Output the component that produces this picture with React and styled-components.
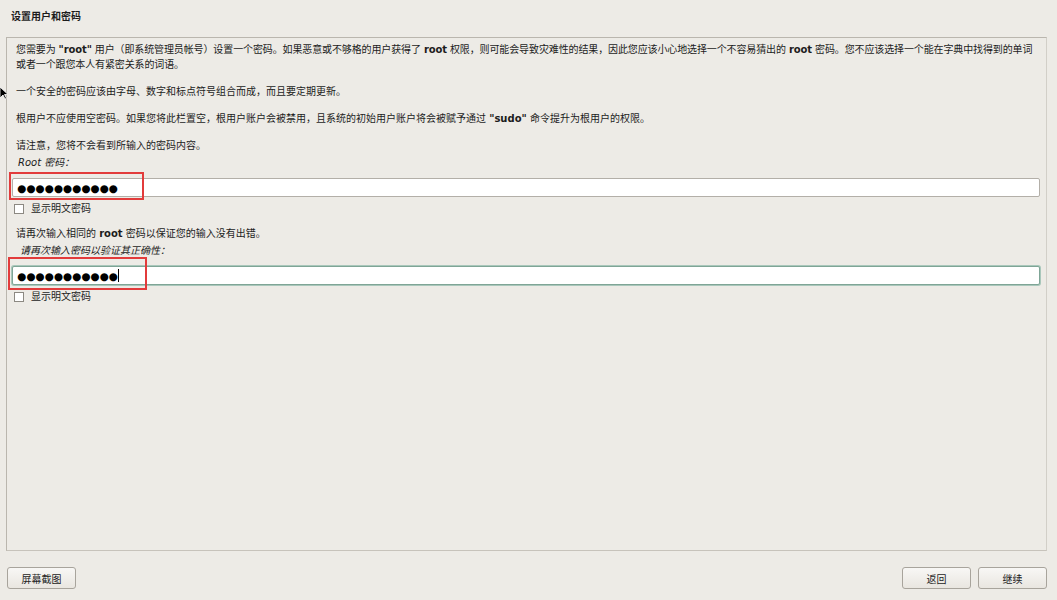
import React from "react"
import styled, { createGlobalStyle } from "styled-components"

const Global = createGlobalStyle`
  html, body {
    margin: 0;
    padding: 0;
    background: #edebe6;
  }
  body {
    font-family: "DejaVu Sans", "Noto Sans CJK SC", sans-serif;
    font-size: 10px;
    color: #1c1c1c;
  }
`

const Page = styled.div`
  position: relative;
  width: 1057px;
  height: 600px;
  display: flex;
  flex-direction: column;
  box-sizing: border-box;
  padding: 0 10px 0 6px;
  overflow: hidden;
`

const Title = styled.div`
  font-weight: bold;
  height: 37px;
  line-height: 33px;
  padding-left: 5px;
`

const Panel = styled.div`
  flex: 1;
  border: 1px solid #bab6ae;
  border-right-color: #d2cfc8;
  border-bottom-color: #c7c3bb;
  padding: 4px 6px 0 9px;
`

const Para = styled.p`
  margin: 0 0 12px 0;
  line-height: 15px;
  letter-spacing: ${(p) => (p.tight ? "-0.12px" : "0")};
`

const Label = styled.div`
  font-style: italic;
  line-height: 15px;
  padding-left: ${(p) => p.indent}px;
  margin-top: -10px;
  margin-bottom: 8px;
`

const Field = styled.div`
  margin: 0 0 0 -4px;
  height: 19px;
  box-sizing: border-box;
  background: #ffffff;
  border: 1px solid ${(p) => (p.focused ? "#7fa596" : "#b3afa8")};
  box-shadow: ${(p) => (p.focused ? "0 0 0 1px #a9c7bb" : "none")};
  border-radius: 2px;
  display: flex;
  align-items: center;
  padding-left: 4px;
  font-size: 10.5px;
  color: #000;
`

const Caret = styled.span`
  display: inline-block;
  width: 1px;
  height: 13px;
  background: #000;
`

const CheckRow = styled.label`
  display: flex;
  align-items: center;
  gap: 7px;
  margin: 6px 0 11px -2px;
  line-height: 12px;
`

const Box = styled.span`
  width: 8px;
  height: 8px;
  border: 1px solid #8c8982;
  background: #ffffff;
`

const Footer = styled.div`
  height: 49px;
  display: flex;
  align-items: flex-start;
  padding-top: 16px;
  box-sizing: border-box;
  gap: 7px;
`

const Spacer = styled.div`
  flex: 1;
`

const Button = styled.button`
  width: 69px;
  height: 22px;
  font-family: "DejaVu Sans", "Noto Sans CJK SC", sans-serif;
  font-size: 10px;
  color: #1c1c1c;
  background: linear-gradient(#f8f7f5, #e9e6e0);
  border: 1px solid #a8a49c;
  border-radius: 3px;
  margin-left: ${(p) => p.ml || 0}px;
  padding: 0;
`

const Mark = styled.div`
  position: absolute;
  border: 2px solid #e23b3b;
  box-sizing: border-box;
  left: ${(p) => p.x}px;
  top: ${(p) => p.y}px;
  width: ${(p) => p.w}px;
  height: ${(p) => p.h}px;
  pointer-events: none;
`

const Pointer = styled.svg`
  position: absolute;
  left: -1px;
  top: 86px;
`

const dots = "●●●●●●●●●●●"

export default function App() {
  return (
    <Page>
      <Global />
      <Title>设置用户和密码</Title>
      <Panel>
        <Para tight>
          您需要为 <b>"root"</b> 用户（即系统管理员帐号）设置一个密码。如果恶意或不够格的用户获得了 <b>root</b> 权限，则可能会导致灾难性的结果，因此您应该小心地选择一个不容易猜出的 <b>root</b> 密码。您不应该选择一个能在字典中找得到的单词或者一个跟您本人有紧密关系的词语。
        </Para>
        <Para>一个安全的密码应该由字母、数字和标点符号组合而成，而且要定期更新。</Para>
        <Para>根用户不应使用空密码。如果您将此栏置空，根用户账户会被禁用，且系统的初始用户账户将会被赋予通过 <b>"sudo"</b> 命令提升为根用户的权限。</Para>
        <Para>请注意，您将不会看到所输入的密码内容。</Para>
        <Label indent={2}>Root 密码：</Label>
        <Field>{dots}</Field>
        <CheckRow>
          <Box />
          显示明文密码
        </CheckRow>
        <Para>请再次输入相同的 <b>root</b> 密码以保证您的输入没有出错。</Para>
        <Label indent={4}>请再次输入密码以验证其正确性：</Label>
        <Field focused>
          {dots}
          <Caret />
        </Field>
        <CheckRow>
          <Box />
          显示明文密码
        </CheckRow>
      </Panel>
      <Footer>
        <Button ml={1}>屏幕截图</Button>
        <Spacer />
        <Button>返回</Button>
        <Button>继续</Button>
      </Footer>
      <Mark x={9} y={172} w={135} h={28} />
      <Mark x={8} y={257} w={139} h={33} />
      <Pointer width="8" height="14" viewBox="0 0 8 14">
        <path d="M1 1 L1 12 L4 9 L6 13 L7.5 12.3 L5.5 8.5 L9 8.5 Z" fill="#000" stroke="#fff" strokeWidth="0.8" />
      </Pointer>
    </Page>
  )
}
